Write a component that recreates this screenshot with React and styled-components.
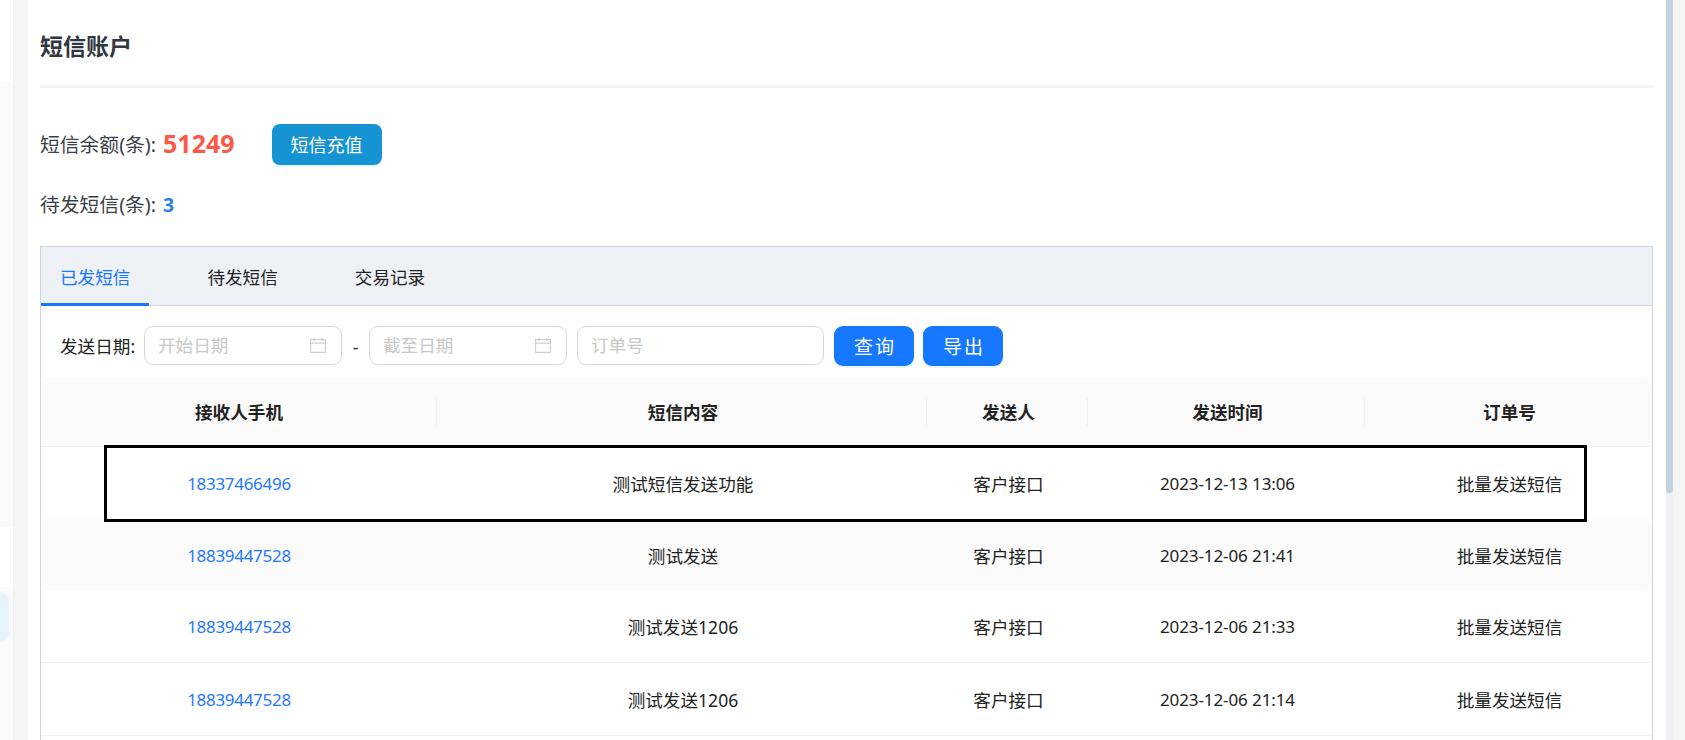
import React from 'react';
import styled, { createGlobalStyle } from 'styled-components';

const Global = createGlobalStyle`
  html, body { margin: 0; padding: 0; height: 740px; overflow: hidden; background: #f5f5f5; }
  body { font-family: "Noto Sans", "Noto Sans CJK SC", sans-serif; color: #222; }
  * { box-sizing: border-box; }
`;

const Page = styled.div`
  display: flex;
  height: 740px;
  width: 1685px;
  overflow: hidden;
  position: relative;
`;

const Sidebar = styled.aside`
  width: 14px;
  flex: none;
  background: #fafafa;
  border-right: 1px solid #f0f0f0;
  display: flex;
  flex-direction: column;
`;
const SideBlock = styled.div`
  height: ${p => p.$h}px;
  flex: none;
  background: #fff;
`;
const SideGap = styled.div`
  height: ${p => p.$h}px;
  flex: none;
`;
const SideActive = styled.div`
  height: 50px;
  width: 9px;
  flex: none;
  margin-top: 5px;
  background: #e6f4ff;
  border-radius: 0 9px 9px 0;
`;
const Gutter = styled.div`
  width: 14px;
  flex: none;
  background: #f5f5f5;
`;
const Main = styled.main`
  width: 1638px;
  flex: none;
  background: #fff;
  padding: 0 13px 0 12px;
`;
const Track = styled.div`
  width: 7px;
  flex: none;
  background: #eef1f6;
`;
const Thumb = styled.div`
  height: 493px;
  background: #c6d1e1;
  border-radius: 0 0 4px 4px;
`;
const Title = styled.h1`
  margin: 0;
  height: 85px;
  padding-top: 31px;
  font-size: 23px;
  line-height: 30px;
  font-weight: 700;
  color: #2f3640;
`;
const Divider = styled.div`
  height: 3px;
  background: #f2f2f2;
`;
const StatRow = styled.div`
  display: flex;
  align-items: center;
  height: ${p => p.$h}px;
  margin-top: ${p => p.$mt}px;
  font-size: 19.8px;
  line-height: 28px;
  color: #3a4048;
`;
const Label = styled.span`
  white-space: nowrap;
`;
const Balance = styled.b`
  margin-left: 7px;
  font-family: "Open Sans", sans-serif;
  font-size: 25px;
  font-weight: 700;
  color: #fc5a45;
  position: relative;
  top: -2px;
`;
const Pending = styled.b`
  margin-left: 7px;
  font-family: "Open Sans", sans-serif;
  font-size: 19.5px;
  font-weight: 700;
  color: #2f7ee6;
`;
const Recharge = styled.button`
  margin-left: 37px;
  width: 110px;
  height: 41px;
  border: 0;
  border-radius: 8px;
  background: #1693d2;
  color: #fff;
  font: inherit;
  font-size: 18px;
  padding: 0;
  box-shadow: 0 2px 0 rgba(5, 145, 255, 0.1);
`;
const Panel = styled.section`
  margin-top: 26px;
  height: 600px;
  border: 1px solid #cbd8e4;
  border-bottom: 0;
`;
const TabBar = styled.div`
  display: flex;
  height: 59px;
  gap: 39px;
  background: #edf0f5;
  border-bottom: 1px solid #d3dbe6;
`;
const Tab = styled.div`
  padding: 0 19px;
  height: 59px;
  line-height: 61px;
  font-size: 17.6px;
  color: ${p => (p.$active ? '#1677ff' : '#222')};
  border-bottom: 3px solid ${p => (p.$active ? '#1677ff' : 'transparent')};
`;
const Filters = styled.div`
  display: flex;
  align-items: flex-start;
  height: 72px;
  padding: 20px 0 0 19px;
`;
const FilterLabel = styled.span`
  font-size: 17.6px;
  line-height: 40px;
  width: 84px;
  flex: none;
  white-space: nowrap;
`;
const InputBox = styled.div`
  display: flex;
  align-items: center;
  justify-content: space-between;
  width: ${p => p.$w}px;
  height: 39px;
  flex: none;
  padding: 0 15px 2px 13px;
  margin-left: ${p => p.$ml || 0}px;
  border: 1px solid #d9d9d9;
  border-radius: 9px;
  background: #fff;
  font-size: 17.6px;
  line-height: 26px;
  color: #c8c8c8;
`;
const Dash = styled.span`
  width: 27px;
  flex: none;
  text-align: center;
  line-height: 42px;
  font-size: 17.6px;
  color: #333;
`;
const ActionBtn = styled.button`
  width: 80px;
  height: 40px;
  flex: none;
  margin-left: ${p => p.$ml}px;
  border: 0;
  border-radius: 9px;
  background: #1677ff;
  color: #fff;
  font: inherit;
  font-size: 19px;
  letter-spacing: 2px;
  padding: 0 0 0 2px;
  box-shadow: 0 2px 0 rgba(5, 145, 255, 0.1);
`;
const Row = styled.div`
  display: grid;
  grid-template-columns: 396px 490px 161px 277px 287px;
  align-items: center;
  height: ${p => p.$h}px;
  padding-top: ${p => p.$pt || 0}px;
  text-align: center;
  font-size: 17.6px;
  line-height: 26px;
  background: ${p => (p.$head || p.$alt ? '#fafafa' : '#fff')};
  border-radius: ${p => (p.$head ? '9px 9px 0 0' : p.$alt ? '9px' : '0')};
  border-bottom: ${p => (p.$line ? '1px solid #f0f0f0' : '0')};
  font-weight: ${p => (p.$head ? 700 : 400)};
  color: #222;
  & > :not(:first-child) {
    padding-left: 2px;
  }
`;
const HeadCell = styled.div`
  position: relative;
  line-height: 28px;
  &:not(:last-child)::after {
    content: '';
    position: absolute;
    right: 0;
    top: 0;
    width: 1px;
    height: 28px;
    background: #f0f0f0;
  }
`;
const Phone = styled.span`
  color: #1f78ff;
  font-size: 17px;
  letter-spacing: -0.3px;
`;
const Time = styled.span`
  font-size: 17px;
  letter-spacing: -0.1px;
`;
const Annotation = styled.div`
  position: absolute;
  left: 104px;
  top: 445px;
  width: 1483px;
  height: 77px;
  border: 3px solid #000;
  pointer-events: none;
`;

const CalendarIcon = () => (
  <svg width="16" height="16" viewBox="0 0 16 16" fill="none" stroke="#cfcfcf" strokeWidth="1.2">
    <rect x="0.6" y="2.6" width="14.8" height="12.8" />
    <path d="M0.6 6.2H15.4M4.2 0.8V4M11.8 0.8V4" />
  </svg>
);

const rows = [
  { h: 71, pt: 2, cells: ['18337466496', '测试短信发送功能', '客户接口', '2023-12-13 13:06', '批量发送短信'] },
  { h: 72, pt: 3, alt: true, cells: ['18839447528', '测试发送', '客户接口', '2023-12-06 21:41', '批量发送短信'] },
  { h: 73, pt: 2, line: true, cells: ['18839447528', '测试发送1206', '客户接口', '2023-12-06 21:33', '批量发送短信'] },
  { h: 73, pt: 2, line: true, cells: ['18839447528', '测试发送1206', '客户接口', '2023-12-06 21:14', '批量发送短信'] },
];
const heads = ['接收人手机', '短信内容', '发送人', '发送时间', '订单号'];

export default function App() {
  return (
    <Page>
      <Global />
      <Sidebar>
        <SideBlock $h={82} />
        <SideGap $h={445} />
        <SideBlock $h={60} />
        <SideActive />
      </Sidebar>
      <Gutter />
      <Main>
        <Title>短信账户</Title>
        <Divider />
        <StatRow $h={41} $mt={36}>
          <Label>短信余额(条):</Label>
          <Balance>51249</Balance>
          <Recharge>短信充值</Recharge>
        </StatRow>
        <StatRow $h={30} $mt={25}>
          <Label>待发短信(条):</Label>
          <Pending>3</Pending>
        </StatRow>
        <Panel>
          <TabBar>
            <Tab $active>已发短信</Tab>
            <Tab>待发短信</Tab>
            <Tab>交易记录</Tab>
          </TabBar>
          <Filters>
            <FilterLabel>发送日期:</FilterLabel>
            <InputBox $w={198}>开始日期<CalendarIcon /></InputBox>
            <Dash>-</Dash>
            <InputBox $w={198}>截至日期<CalendarIcon /></InputBox>
            <InputBox $w={247} $ml={10}>订单号</InputBox>
            <ActionBtn $ml={10}>查询</ActionBtn>
            <ActionBtn $ml={9}>导出</ActionBtn>
          </Filters>
          <Row $head $line $h={69}>
            {heads.map(h => <HeadCell key={h}>{h}</HeadCell>)}
          </Row>
          {rows.map((r, i) => (
            <Row key={i} $alt={r.alt} $line={r.line} $h={r.h} $pt={r.pt}>
              <Phone>{r.cells[0]}</Phone>
              <div>{r.cells[1]}</div>
              <div>{r.cells[2]}</div>
              <Time>{r.cells[3]}</Time>
              <div>{r.cells[4]}</div>
            </Row>
          ))}
        </Panel>
      </Main>
      <Track><Thumb /></Track>
      <Annotation />
    </Page>
  );
}
